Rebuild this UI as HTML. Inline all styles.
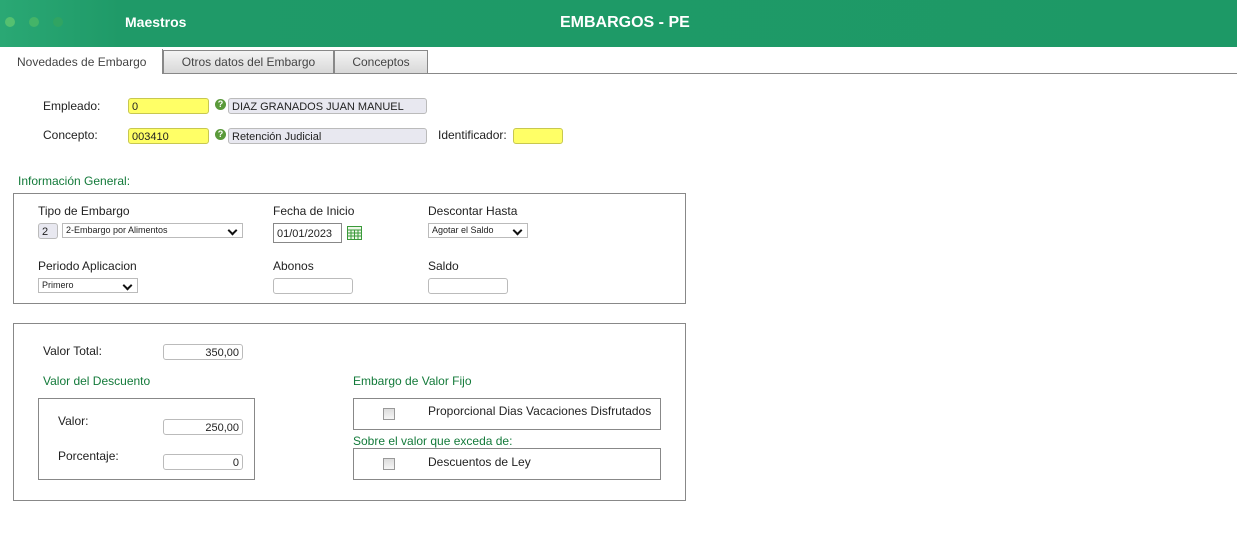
<!DOCTYPE html>
<html><head><meta charset="utf-8"><style>
*{box-sizing:border-box;margin:0;padding:0}
body{width:1237px;height:544px;background:#fff;font-family:"Liberation Sans",sans-serif;font-size:12px;color:#222;position:relative;overflow:hidden}
.a{position:absolute;white-space:nowrap}
.hdr{position:absolute;left:0;top:0;width:1237px;height:47px;background:linear-gradient(90deg,#2aa874 0,#1f9a68 120px,#1d9966 100%)}
.dot{position:absolute;top:17px;width:10px;height:10px;border-radius:50%}
.tab{position:absolute;top:50px;height:23px;border:1px solid #888;border-bottom:none;background:linear-gradient(#f4f4f4,#d8d8d8);text-align:center;line-height:22px;color:#444}
.inp{position:absolute;height:16px;border:1px solid #bbb;border-radius:3px;background:#fff;font-size:11px;line-height:17px;padding:0 3px}
.y{background:#ffff66;border-color:#c8c850}
.g{background:#e8e8f0;border-color:#bbb}
.sel{position:absolute;height:15px;border:1px solid #bbb;background:#fff;font-size:9px;line-height:13px;padding-left:3px}
.sel:after{content:"";position:absolute;right:6px;top:3px;width:5px;height:5px;border-right:2px solid #111;border-bottom:2px solid #111;transform:rotate(45deg)}
.box{position:absolute;border:1px solid #888}
.gr{color:#137a3a}
.q{position:absolute;width:11px;height:11px;border-radius:50%;background:#5a9a3a;color:#fff;font-size:9px;font-weight:bold;text-align:center;line-height:11px}
.cb{position:absolute;width:12px;height:12px;border:1px solid #999;background:linear-gradient(#ddd,#f6f6f6)}
.r{text-align:right}
</style></head><body>
<div class="hdr"></div>
<div class="dot" style="left:5px;background:#55c070"></div>
<div class="dot" style="left:29px;background:#44b468"></div>
<div class="dot" style="left:53px;background:#30a462"></div>
<div class="a" style="left:125px;top:14px;color:#fff;font-weight:bold;font-size:14px">Maestros</div>
<div class="a" style="left:560px;top:14px;color:#fff;font-weight:bold;font-size:16px">EMBARGOS - PE</div>
<div class="a" style="left:0;top:73px;width:1237px;border-top:1px solid #888"></div>
<div class="a" style="left:0;top:49px;width:163px;height:25px;border-right:1px solid #888;background:#fff"></div>
<div class="a" style="left:17px;top:55px;color:#444">Novedades de Embargo</div>
<div class="tab" style="left:163px;width:171px">Otros datos del Embargo</div>
<div class="tab" style="left:334px;width:94px">Conceptos</div>

<div class="a" style="left:43px;top:99px">Empleado:</div>
<div class="inp y" style="left:128px;top:98px;width:81px">0</div>
<div class="q" style="left:215px;top:99px">?</div>
<div class="inp g" style="left:228px;top:98px;width:199px">DIAZ GRANADOS JUAN MANUEL</div>
<div class="a" style="left:43px;top:128px">Concepto:</div>
<div class="inp y" style="left:128px;top:128px;width:81px">003410</div>
<div class="q" style="left:215px;top:129px">?</div>
<div class="inp g" style="left:228px;top:128px;width:199px">Retención Judicial</div>
<div class="a" style="left:438px;top:128px">Identificador:</div>
<div class="inp y" style="left:513px;top:128px;width:50px"></div>

<div class="a gr" style="left:18px;top:174px">Información General:</div>
<div class="box" style="left:13px;top:193px;width:673px;height:111px"></div>
<div class="a" style="left:38px;top:204px">Tipo de Embargo</div>
<div class="inp g" style="left:38px;top:223px;width:20px;border-radius:3px">2</div>
<div class="sel" style="left:62px;top:223px;width:181px">2-Embargo por Alimentos</div>
<div class="a" style="left:273px;top:204px">Fecha de Inicio</div>
<div class="inp" style="left:273px;top:223px;width:69px;height:20px;border-color:#888;border-radius:0;line-height:20px;font-size:11px">01/01/2023</div>
<svg class="a" style="left:347px;top:226px" width="15" height="14"><rect x="0.5" y="0.5" width="14" height="13" fill="#eef8e8" stroke="#3a9a3a"/><path d="M0 4h15M0 7h15M0 10h15M4 4v10M7.5 4v10M11 4v10" stroke="#3a9a3a" stroke-width="1"/></svg>
<div class="a" style="left:428px;top:204px">Descontar Hasta</div>
<div class="sel" style="left:428px;top:223px;width:100px">Agotar el Saldo</div>
<div class="a" style="left:38px;top:259px">Periodo Aplicacion</div>
<div class="sel" style="left:38px;top:278px;width:100px">Primero</div>
<div class="a" style="left:273px;top:259px">Abonos</div>
<div class="inp" style="left:273px;top:278px;width:80px"></div>
<div class="a" style="left:428px;top:259px">Saldo</div>
<div class="inp" style="left:428px;top:278px;width:80px"></div>

<div class="box" style="left:13px;top:323px;width:673px;height:178px"></div>
<div class="a" style="left:43px;top:344px">Valor Total:</div>
<div class="inp r" style="left:163px;top:344px;width:80px">350,00</div>
<div class="a gr" style="left:43px;top:374px">Valor del Descuento</div>
<div class="box" style="left:38px;top:398px;width:217px;height:82px"></div>
<div class="a" style="left:58px;top:414px">Valor:</div>
<div class="inp r" style="left:163px;top:419px;width:80px">250,00</div>
<div class="a" style="left:58px;top:449px">Porcentaje:</div>
<div class="inp r" style="left:163px;top:454px;width:80px">0</div>
<div class="a gr" style="left:353px;top:374px">Embargo de Valor Fijo</div>
<div class="box" style="left:353px;top:398px;width:308px;height:32px"></div>
<div class="cb" style="left:383px;top:408px"></div>
<div class="a" style="left:428px;top:404px">Proporcional Dias Vacaciones Disfrutados</div>
<div class="a gr" style="left:353px;top:434px">Sobre el valor que exceda de:</div>
<div class="box" style="left:353px;top:448px;width:308px;height:32px"></div>
<div class="cb" style="left:383px;top:458px"></div>
<div class="a" style="left:428px;top:455px">Descuentos de Ley</div>
</body></html>
